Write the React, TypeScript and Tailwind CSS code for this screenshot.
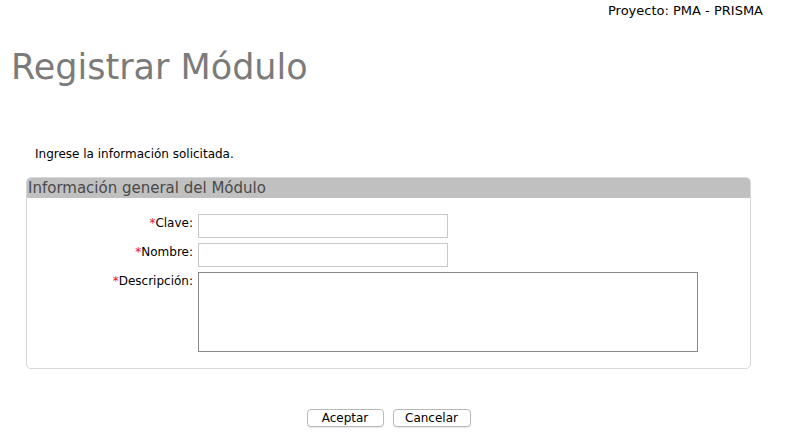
export default function App() {
  return (
    <div className="w-[788px] h-[434px] bg-white text-[12px] text-black font-['DejaVu_Sans',Verdana,sans-serif] overflow-hidden">
      <div className="flex justify-end pr-[25px] pt-[4px] h-[20px] leading-[14px] text-[13px]">
        Proyecto: PMA - PRISMA
      </div>
      <h1 className="ml-[11px] mt-[25px] text-[35px] leading-[44px] text-[#7b7b7b]">
        Registrar Módulo
      </h1>
      <p className="ml-[35px] mt-[58px] leading-[14px]">Ingrese la información solicitada.</p>
      <div className="ml-[26px] mt-[16px] w-[725px] h-[192px] border border-[#d4d8d8] rounded-[5px] overflow-hidden">
        <div className="h-[20px] bg-[#c0c0c0] px-[1px] text-[15px] leading-[21px] text-[#4a4a4a]">
          Información general del Módulo
        </div>
        <div className="pt-[16px] flex flex-col gap-[5px]">
          <Row label="Clave">
            <input className="w-[250px] h-[24px] border border-[#c8c8c8] outline-none" />
          </Row>
          <Row label="Nombre">
            <input className="w-[250px] h-[24px] border border-[#c8c8c8] outline-none" />
          </Row>
          <Row label="Descripción">
            <textarea className="w-[500px] h-[80px] border border-[#8a8a8a] resize-none outline-none" />
          </Row>
        </div>
      </div>
      <div className="flex justify-center gap-[9px] ml-[26px] w-[725px] mt-[40px]">
        <button className="w-[77px] h-[18px] border border-[#b8b8b8] rounded-[4px] bg-white text-[12px] leading-[16px] shadow-[0_1px_1px_rgba(0,0,0,0.1)]">
          Aceptar
        </button>
        <button className="w-[78px] h-[18px] border border-[#b8b8b8] rounded-[4px] bg-white text-[12px] leading-[16px] shadow-[0_1px_1px_rgba(0,0,0,0.1)]">
          Cancelar
        </button>
      </div>
    </div>
  );
}

function Row({ label, children }: { label: string; children: React.ReactNode }) {
  return (
    <div className="flex items-start gap-[5px]">
      <label className="w-[166px] text-right leading-[14px] pt-[2px]">
        <span className="text-[#e8101a]">*</span>
        {label}:
      </label>
      {children}
    </div>
  );
}
